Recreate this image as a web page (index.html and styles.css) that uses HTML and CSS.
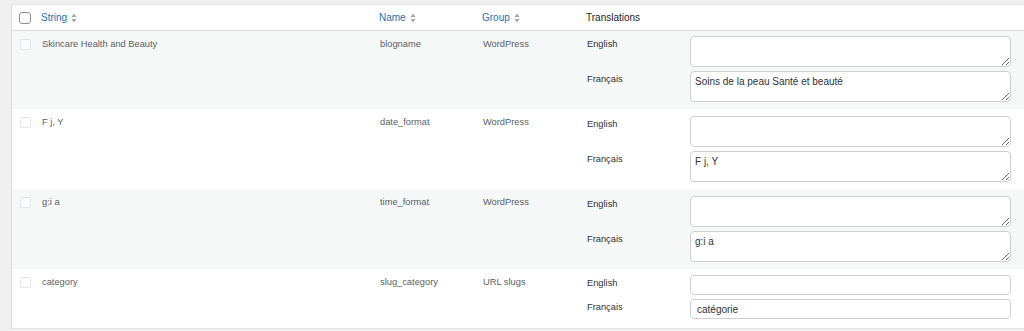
FILE: index.html
```html
<!DOCTYPE html>
<html lang="en">
<head>
<meta charset="utf-8">
<title>Strings translations</title>
<link rel="stylesheet" href="styles.css">
</head>
<body>
<div class="panel">
  <table class="strings">
    <colgroup>
      <col class="c-cb">
      <col class="c-string">
      <col class="c-name">
      <col class="c-group">
      <col class="c-trans">
    </colgroup>
    <thead>
      <tr>
        <th class="cb"><span class="box head-box"></span></th>
        <th><a class="sort">String <svg class="sort-ic" viewBox="0 0 6 10" width="6" height="10"><path d="M3 0.5 L5.6 4 H0.4 Z M3 9.5 L0.4 6 H5.6 Z"/></svg></a></th>
        <th><a class="sort">Name <svg class="sort-ic" viewBox="0 0 6 10" width="6" height="10"><path d="M3 0.5 L5.6 4 H0.4 Z M3 9.5 L0.4 6 H5.6 Z"/></svg></a></th>
        <th><a class="sort">Group <svg class="sort-ic" viewBox="0 0 6 10" width="6" height="10"><path d="M3 0.5 L5.6 4 H0.4 Z M3 9.5 L0.4 6 H5.6 Z"/></svg></a></th>
        <th class="plain">Translations</th>
      </tr>
    </thead>
    <tbody>
      <tr class="alt first">
        <td class="cb"><span class="box"></span></td>
        <td>Skincare Health and Beauty</td>
        <td>blogname</td>
        <td>WordPress</td>
        <td class="trans">
          <div class="tgrid">
            <label>English</label><textarea></textarea>
            <label>Français</label><textarea>Soins de la peau Santé et beauté</textarea>
          </div>
        </td>
      </tr>
      <tr>
        <td class="cb"><span class="box"></span></td>
        <td>F j, Y</td>
        <td>date_format</td>
        <td>WordPress</td>
        <td class="trans">
          <div class="tgrid">
            <label>English</label><textarea></textarea>
            <label>Français</label><textarea>F j, Y</textarea>
          </div>
        </td>
      </tr>
      <tr class="alt">
        <td class="cb"><span class="box"></span></td>
        <td>g:i a</td>
        <td>time_format</td>
        <td>WordPress</td>
        <td class="trans">
          <div class="tgrid">
            <label>English</label><textarea></textarea>
            <label>Français</label><textarea>g:i a</textarea>
          </div>
        </td>
      </tr>
      <tr class="last">
        <td class="cb"><span class="box"></span></td>
        <td>category</td>
        <td>slug_category</td>
        <td>URL slugs</td>
        <td class="trans">
          <div class="tgrid">
            <label>English</label><input type="text" value="">
            <label>Français</label><input type="text" value="catégorie">
          </div>
        </td>
      </tr>
    </tbody>
  </table>
</div>
</body>
</html>
```

FILE: styles.css
```css
html, body {
  margin: 0;
  padding: 0;
  background: #f0f0f1;
  overflow: hidden;
  font-family: "Liberation Sans", Arial, sans-serif;
}

.panel {
  margin: 4px 0 0 11px;
  width: 1040px;
  background: #fff;
  border-top: 1px solid #e2e4e7;
  border-left: 1px solid #dcdcde;
  border-bottom: 1px solid #e2e4e7;
}

.strings {
  width: 1040px;
  table-layout: fixed;
  border-collapse: separate;
  border-spacing: 0;
}

.c-cb { width: 22px; }
.c-string { width: 338px; }
.c-name { width: 103px; }
.c-group { width: 104px; }

thead th {
  height: 25px;
  padding: 0 0 0 7px;
  text-align: left;
  font-weight: normal;
  font-size: 10px;
  line-height: 14px;
  vertical-align: middle;
  border-bottom: 1px solid #dcdcde;
  color: #1d2327;
}

thead th.cb { padding-left: 7px; }

.sort {
  color: #2271b1;
  display: inline-flex;
  align-items: center;
  gap: 4px;
}

.sort-ic {
  fill: #a7aaad;
}

.box {
  display: block;
  box-sizing: border-box;
  width: 11px;
  height: 11px;
  border: 1px solid #e3e5e8;
  border-radius: 2px;
  background: rgba(255, 255, 255, 0.5);
}

.head-box {
  width: 12px;
  height: 12px;
  border: 1px solid #8c8f94;
  border-radius: 3px;
  background: #fff;
}

tbody td {
  vertical-align: top;
  padding: 7px 0 7px 8px;
  font-size: 9.3px;
  line-height: 13px;
  color: #595f66;
}

tbody tr.alt td { background: #f6f7f7; }

tbody td.cb { padding: 8px 0 0 8px; }

tbody td.trans {
  padding: 7px 0 7px 8px;
}

tbody tr.first td.trans { padding-top: 5px; padding-bottom: 7px; }

tbody tr.last td.trans { padding-top: 6px; padding-bottom: 9px; }

.tgrid {
  display: grid;
  grid-template-columns: 103px 321px;
  row-gap: 4px;
  align-items: start;
}

.tgrid label {
  padding-top: 1px;
  font-size: 9.3px;
  line-height: 14px;
  color: #2c3338;
}

.tgrid textarea,
.tgrid input {
  display: block;
  box-sizing: border-box;
  width: 321px;
  margin: 0;
  border: 1px solid #cdcfd2;
  border-radius: 4px;
  background: #fff;
  font-family: "Liberation Sans", Arial, sans-serif;
  font-size: 10px;
  color: #2c3338;
  outline: none;
}

.tgrid textarea {
  height: 31px;
  padding: 3px 4px;
  line-height: 13px;
  resize: vertical;
  overflow: hidden;
}

.tgrid input {
  height: 20px;
  padding: 0 6px;
  line-height: 18px;
}
```
